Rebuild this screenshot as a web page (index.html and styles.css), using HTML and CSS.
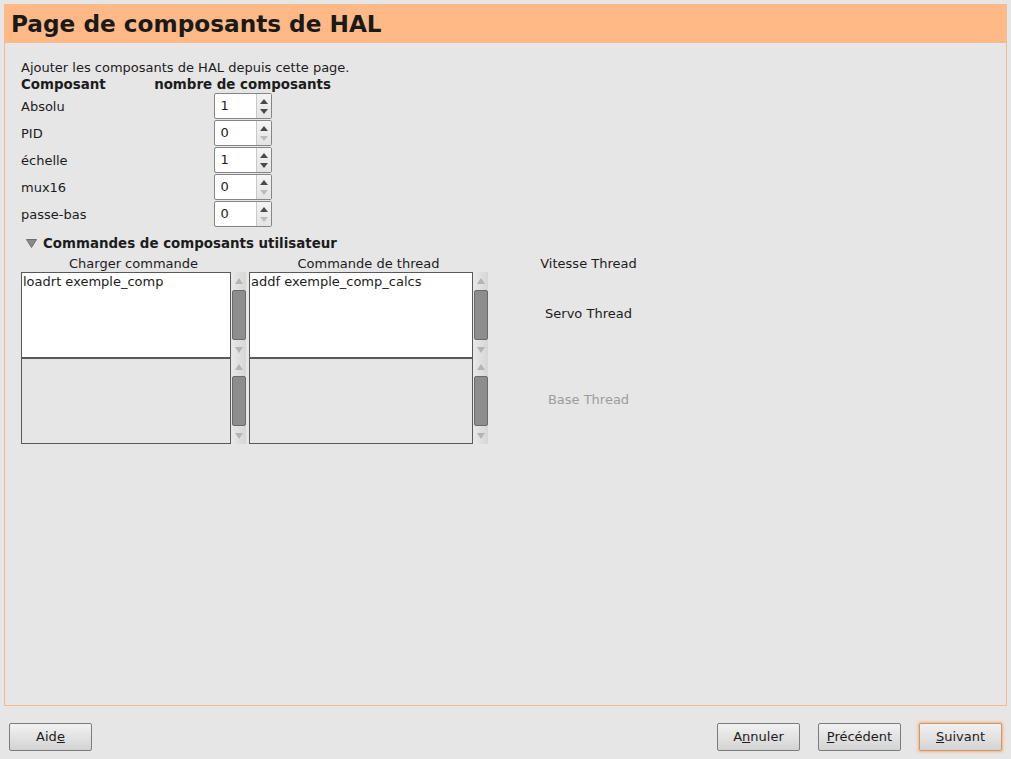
FILE: index.html
```html
<!DOCTYPE html>
<html lang="fr">
<head>
<meta charset="utf-8">
<title>Page de composants de HAL</title>
<link rel="stylesheet" href="styles.css">
</head>
<body>
<div class="frame">
  <div class="header"><h1 class="title">Page de composants de HAL</h1></div>
  <div class="content">
    <p class="intro">Ajouter les composants de HAL depuis cette page.</p>
    <div class="comp-grid">
      <div class="th">Composant</div>
      <div class="th th-c">nombre de composants</div>

      <div class="lbl">Absolu</div>
      <div class="center"><div class="spin"><span class="spin-entry">1</span><span class="spin-btns"><i class="up"></i><i class="down"></i></span></div></div>

      <div class="lbl">PID</div>
      <div class="center"><div class="spin"><span class="spin-entry">0</span><span class="spin-btns"><i class="up"></i><i class="down off"></i></span></div></div>

      <div class="lbl">échelle</div>
      <div class="center"><div class="spin"><span class="spin-entry">1</span><span class="spin-btns"><i class="up"></i><i class="down"></i></span></div></div>

      <div class="lbl">mux16</div>
      <div class="center"><div class="spin"><span class="spin-entry">0</span><span class="spin-btns"><i class="up"></i><i class="down off"></i></span></div></div>

      <div class="lbl">passe-bas</div>
      <div class="center"><div class="spin"><span class="spin-entry">0</span><span class="spin-btns"><i class="up"></i><i class="down off"></i></span></div></div>
    </div>

    <div class="expander">
      <svg class="exp-arrow" width="11" height="9" viewBox="0 0 11 9"><polygon points="0.5,0.5 10.5,0.5 5.5,8.5" fill="#8a8a8a" stroke="#6e6e6e" stroke-width="1"/></svg>
      <span>Commandes de composants utilisateur</span>
    </div>

    <div class="cmd-grid">
      <div class="colhead">Charger commande</div>
      <div class="colhead">Commande de thread</div>
      <div class="colhead">Vitesse Thread</div>

      <div class="tvwrap">
        <div class="tv">loadrt exemple_comp</div>
        <div class="vscroll"><span class="sb-btn"><i class="sa up"></i></span><span class="sb-trough"><span class="thumb"></span></span><span class="sb-btn"><i class="sa down"></i></span></div>
      </div>
      <div class="tvwrap">
        <div class="tv">addf exemple_comp_calcs</div>
        <div class="vscroll"><span class="sb-btn"><i class="sa up"></i></span><span class="sb-trough"><span class="thumb"></span></span><span class="sb-btn"><i class="sa down"></i></span></div>
      </div>
      <div class="thread">Servo Thread</div>

      <div class="tvwrap">
        <div class="tv off"></div>
        <div class="vscroll"><span class="sb-btn"><i class="sa up"></i></span><span class="sb-trough"><span class="thumb"></span></span><span class="sb-btn"><i class="sa down"></i></span></div>
      </div>
      <div class="tvwrap">
        <div class="tv off"></div>
        <div class="vscroll"><span class="sb-btn"><i class="sa up"></i></span><span class="sb-trough"><span class="thumb"></span></span><span class="sb-btn"><i class="sa down"></i></span></div>
      </div>
      <div class="thread off">Base Thread</div>
    </div>
  </div>
</div>
<div class="actions">
  <button class="btn">Aid<u>e</u></button>
  <span class="spacer"></span>
  <button class="btn">A<u>n</u>nuler</button>
  <button class="btn"><u>P</u>récédent</button>
  <button class="btn focus"><u>S</u>uivant</button>
</div>
</body>
</html>
```

FILE: styles.css
```css
html, body {
  margin: 0;
  padding: 0;
  background: #e6e6e6;
}
body {
  font-family: "DejaVu Sans", "Liberation Sans", sans-serif;
  font-size: 13px;
  color: #1c1c1c;
  width: 1011px;
  height: 759px;
  overflow: hidden;
}
.frame {
  margin: 4px 4px 0 4px;
  height: 702px;
  box-sizing: border-box;
  border: 1px solid #fbb888;
  border-top: none;
  display: flex;
  flex-direction: column;
}
.header {
  background: #ffb987;
  height: 39px;
  display: flex;
  align-items: center;
  padding-left: 6px;
}
.title {
  margin: 0;
  font-size: 23.2px;
  font-weight: bold;
  color: #1a1a1a;
  line-height: 28px;
}
.content {
  padding: 16px 0 0 16px;
}
.intro {
  margin: 0;
  line-height: 17px;
}
.comp-grid {
  display: grid;
  grid-template-columns: 133px 177px;
  grid-template-rows: 16px;
  grid-auto-rows: 26px;
  row-gap: 1px;
}
.comp-grid .th {
  font-weight: bold;
  font-size: 13.4px;
  line-height: 16px;
  padding-top: 1px;
  white-space: nowrap;
}
.comp-grid .th-c {
  text-align: center;
}
.center {
  display: flex;
  justify-content: center;
  align-items: center;
}
.lbl {
  display: flex;
  align-items: center;
}
.spin {
  display: flex;
  width: 58px;
  height: 26px;
  box-sizing: border-box;
  border: 1px solid #858585;
  border-radius: 2px;
  background: #fff;
}
.spin-entry {
  flex: 1;
  padding-left: 6px;
  line-height: 24px;
  font-size: 13px;
}
.spin-btns {
  width: 15px;
  border-left: 1px solid #c8c8c8;
  background: linear-gradient(#f4f4f4, #e4e4e4);
  display: flex;
  flex-direction: column;
  align-items: center;
  justify-content: space-around;
  padding: 2px 0;
  box-sizing: border-box;
}
.spin-btns i {
  display: block;
  width: 0;
  height: 0;
  border-left: 4px solid transparent;
  border-right: 4px solid transparent;
}
.spin-btns i.up {
  border-bottom: 5px solid #4a4a4a;
}
.spin-btns i.down {
  border-top: 5px solid #4a4a4a;
}
.spin-btns i.down.off {
  border-top-color: #bcbcbc;
}
.expander {
  margin-top: 8px;
  display: flex;
  align-items: center;
  gap: 6px;
  padding-left: 5px;
  font-weight: bold;
  font-size: 13.4px;
  line-height: 17px;
}
.exp-arrow {
  display: block;
}
.cmd-grid {
  margin-top: 3px;
  display: grid;
  grid-template-columns: 225px 239px 195px;
  grid-template-rows: 17px 86px 86px;
  column-gap: 3px;
}
.colhead {
  text-align: center;
  line-height: 17px;
}
.tvwrap {
  display: flex;
}
.tv {
  flex: 1;
  background: #fff;
  border: 1px solid #595959;
  padding: 1px 0 0 1px;
  line-height: 16px;
  white-space: nowrap;
}
.tv.off {
  background: #e6e6e6;
}
.vscroll {
  width: 15px;
  display: flex;
  flex-direction: column;
  background: linear-gradient(90deg, #e9e9e9, #d6d6d6);
}
.sb-btn {
  height: 17px;
  display: flex;
  align-items: center;
  justify-content: center;
}
.sa {
  display: block;
  width: 0;
  height: 0;
  border-left: 4px solid transparent;
  border-right: 4px solid transparent;
}
.sa.up {
  border-bottom: 6px solid #b4b4b4;
}
.sa.down {
  border-top: 6px solid #b4b4b4;
}
.sb-trough {
  flex: 1;
  display: flex;
  padding: 0 0 0 1px;
}
.thumb {
  flex: 1;
  margin: 1px 0 1px 0;
  background: #8d8d8d;
  border: 1px solid #6b6b6b;
  border-radius: 2px;
}
.thread {
  display: flex;
  align-items: center;
  justify-content: center;
  padding-bottom: 3px;
}
.thread.off {
  color: #9c9c9c;
}
.actions {
  display: flex;
  align-items: center;
  padding: 17px 9px 0 9px;
  gap: 18px;
}
.spacer {
  flex: 1;
}
.btn {
  width: 83px;
  height: 28px;
  font-family: "DejaVu Sans", "Liberation Sans", sans-serif;
  font-size: 13px;
  line-height: 16px;
  color: #1c1c1c;
  background: linear-gradient(#f2f2f2, #d3d3d3);
  border: 1px solid #7c7c7c;
  border-radius: 2px;
  padding: 0 0 1px 0;
}
.btn u {
  text-decoration: underline;
}
.btn.focus {
  border-color: #c89a72;
  box-shadow: 0 0 0 1px #f7c197, 0 0 2px 2px rgba(250, 180, 130, 0.45);
}
```
